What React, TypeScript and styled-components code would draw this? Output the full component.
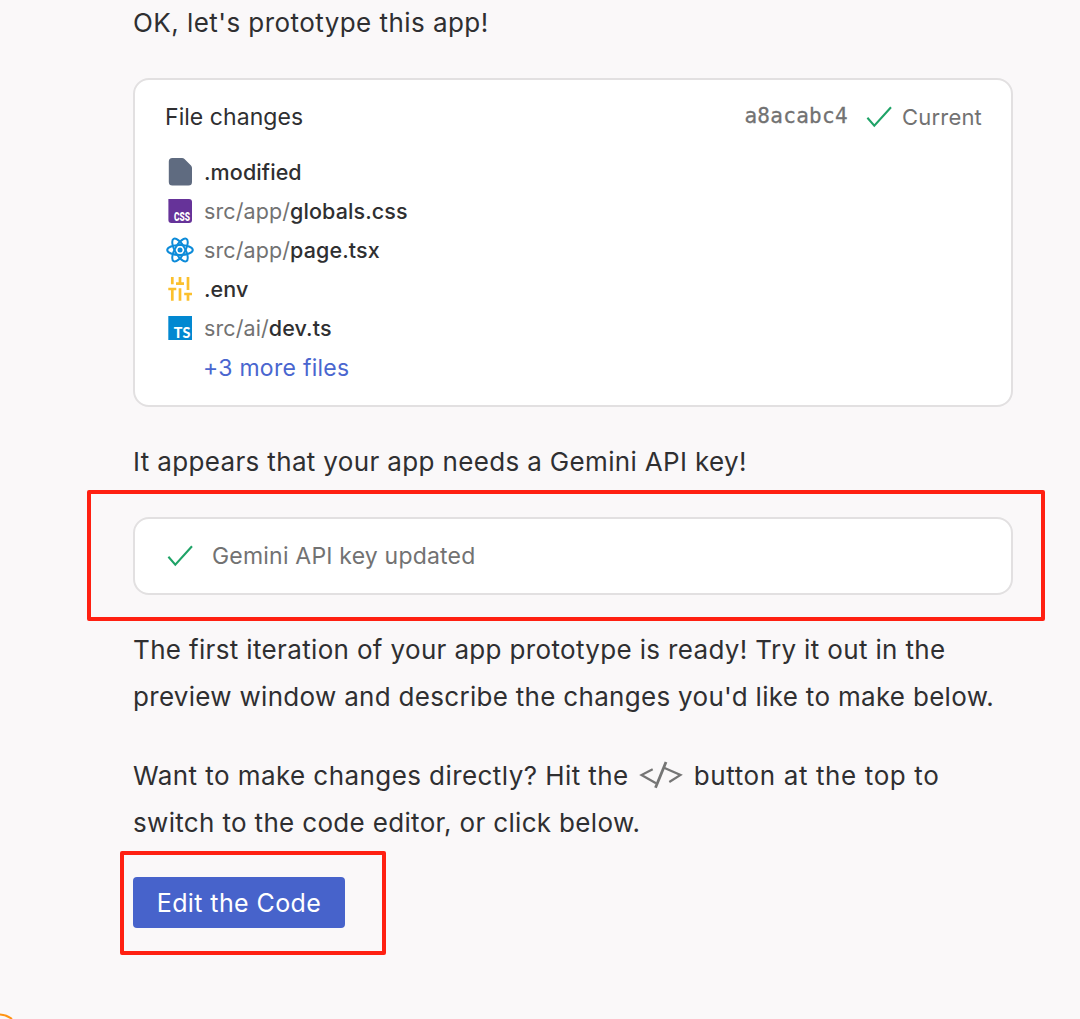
import React from "react";
import styled, { createGlobalStyle } from "styled-components";

const GlobalStyle = createGlobalStyle`
  body { margin: 0; background: #faf8f9; }
  * { box-sizing: border-box; }
`;

const Page = styled.main`
  position: relative;
  width: 1080px;
  height: 1019px;
  overflow: hidden;
  padding: 0 67px 0 133px;
  display: flex;
  flex-direction: column;
  align-items: stretch;
  background: #faf8f9;
  color: #2f2f31;
  font-family: Inter, "Liberation Sans", sans-serif;
  font-size: 26px;
`;

const Paragraph = styled.p<{ $top?: number; $spacing?: number }>`
  margin: ${(p) => p.$top ?? 0}px 0 0;
  line-height: 47px;
  letter-spacing: ${(p) => p.$spacing ?? 0}px;
  white-space: nowrap;
`;

const Line = styled.span<{ $spacing?: number }>`
  display: block;
  letter-spacing: ${(p) => p.$spacing ?? 0}px;
`;

const LineEnd = styled.span`
  letter-spacing: 0.62px;
`;

const Card = styled.section`
  border: 2px solid #e2e0e1;
  border-radius: 16px;
  background: #fff;
`;

const FilesCard = styled(Card)`
  height: 329px;
  margin-top: 32px;
  padding: 16px 29px 0 30px;
`;

const CardHeader = styled.header`
  display: flex;
  align-items: center;
  justify-content: space-between;
  height: 42px;
  margin-bottom: 14px;
  font-size: 23px;
`;

const Title = styled.span`
  letter-spacing: 0.05px;
`;

const Status = styled.div`
  display: flex;
  align-items: center;
  color: #727272;
`;

const Hash = styled.code`
  margin: 0 17px 3px 0;
  font-family: "DejaVu Sans Mono", "Liberation Mono", monospace;
  font-size: 21px;
  letter-spacing: 0.3px;
  -webkit-text-stroke: 0.3px #727272;
`;

const StatusText = styled.span`
  margin-left: 9px;
  font-size: 22px;
  letter-spacing: 0.2px;
`;

const FileList = styled.ul`
  list-style: none;
  margin: 0;
  padding: 0;
`;

const FileRow = styled.li`
  display: flex;
  align-items: center;
  height: 39.2px;
  gap: 9px;
  font-size: 21.5px;
  white-space: nowrap;
`;

const IconSlot = styled.span`
  display: flex;
  width: 30px;
  height: 30px;
  flex: none;
`;

const FileName = styled.span`
  letter-spacing: 0.1px;
  font-weight: 450;
`;

const Folder = styled.span`
  color: #727272;
  font-weight: 400;
`;

const MoreLink = styled.a`
  margin-left: -1px;
  color: #4a66cf;
  font-size: 23px;
  letter-spacing: 0.27px;
`;

const KeyCard = styled(Card)`
  display: flex;
  align-items: center;
  height: 78px;
  margin-top: 32px;
  padding: 0 31px;
  gap: 18px;
  color: #727272;
  font-size: 23px;
`;

const KeyText = styled.span`
  letter-spacing: 0.2px;
`;

const EditButton = styled.button`
  align-self: flex-start;
  width: 212px;
  height: 51px;
  margin-top: 31px;
  padding: 0;
  border: 0;
  border-radius: 4px;
  background: #4763cb;
  color: #fff;
  font: inherit;
  font-size: 25px;
  letter-spacing: 0.4px;
`;

const Marker = styled.div<{ $x: number; $y: number; $w: number; $h: number }>`
  position: absolute;
  left: ${(p) => p.$x}px;
  top: ${(p) => p.$y}px;
  width: ${(p) => p.$w}px;
  height: ${(p) => p.$h}px;
  border: 4px solid #ff2012;
  border-radius: 2px;
  pointer-events: none;
`;

const CornerArc = styled.svg`
  position: absolute;
  left: 0;
  bottom: 0;
`;

const CodeGlyph = styled.svg`
  display: inline-block;
  vertical-align: -4px;
  margin: 0 10px 0 9px;
`;

const Check = () => (
  <svg width="28" height="28" viewBox="0 0 28 28" fill="none" stroke="#1fa367" strokeWidth="2.1">
    <path d="M2.4 14.7 9.3 22.6 26 4.200" />
  </svg>
);

const DocIcon = () => (
  <svg width="30" height="30" viewBox="0 0 30 30">
    <path fill="#5f6b80" d="M7.300 1H17q1.500 0 2.500 1L26 8.500q1 1 1 2.500v14q0 3.500-3.500 3.500H7.300q-3.500 0-3.500-3.500V4.500Q3.800 1 7.300 1z" />
  </svg>
);

const CssIcon = () => (
  <svg width="30" height="30" viewBox="0 0 30 30" overflow="visible">
    <path fill="#663399" d="M3.400 3H24q3 0 3 3v18q0 3-3 3H6.400q-3 0-3-3z" />
    <text x="9" y="24.800" fill="#fff" fontFamily="Roboto, sans-serif" fontWeight="900" fontSize="12" textLength="16" lengthAdjust="spacingAndGlyphs">CSS</text>
  </svg>
);

const ReactIcon = () => (
  <svg width="30" height="30" viewBox="0 0 30 30" fill="none" stroke="#0d8bd9" strokeWidth="2">
    <ellipse cx="15" cy="15" rx="12.800" ry="5" />
    <ellipse cx="15" cy="15" rx="12.800" ry="5" transform="rotate(60 15 15)" />
    <ellipse cx="15" cy="15" rx="12.800" ry="5" transform="rotate(120 15 15)" />
    <circle cx="15" cy="15" r="2.500" fill="#0d8bd9" stroke="none" />
  </svg>
);

const TuneIcon = () => (
  <svg width="30" height="30" viewBox="0 0 30 30" stroke="#fbc02d" strokeWidth="2.700">
    <path d="M7.300 3v7.300M3.300 15h8M7.300 15v11.700M15 3v6M11 9.700h8M15 14.300v12.400M23 3v13M19.200 20h7.800M23 20v6.700" />
  </svg>
);

const TsIcon = () => (
  <svg width="30" height="30" viewBox="0 0 30 30" overflow="visible">
    <path fill="#0288d1" d="M3.300 3H27v24H3.300z" />
    <text x="8.800" y="24.800" fill="#fff" fontFamily="Lato, sans-serif" fontWeight="900" fontSize="14.500" textLength="16.500" lengthAdjust="spacingAndGlyphs">TS</text>
  </svg>
);

const files = [
  { icon: DocIcon, folder: "", name: ".modified" },
  { icon: CssIcon, folder: "src/app/", name: "globals.css" },
  { icon: ReactIcon, folder: "src/app/", name: "page.tsx" },
  { icon: TuneIcon, folder: "", name: ".env" },
  { icon: TsIcon, folder: "src/ai/", name: "dev.ts" },
];

export default function App() {
  return (
    <>
      <GlobalStyle />
      <Page>
        <Paragraph $top={-1} $spacing={0.44}>OK, let's prototype this app!</Paragraph>
        <FilesCard>
          <CardHeader>
            <Title>File changes</Title>
            <Status>
              <Hash>a8acabc4</Hash>
              <Check />
              <StatusText>Current</StatusText>
            </Status>
          </CardHeader>
          <FileList>
            {files.map(({ icon: Icon, folder, name }) => (
              <FileRow key={folder + name}>
                <IconSlot><Icon /></IconSlot>
                <FileName>
                  {folder && <Folder>{folder}</Folder>}
                  {name}
                </FileName>
              </FileRow>
            ))}
            <FileRow>
              <IconSlot />
              <MoreLink>+3 more files</MoreLink>
            </FileRow>
          </FileList>
        </FilesCard>
        <Paragraph $top={31} $spacing={0.35}>It appears that your app needs a Gemini API key!</Paragraph>
        <KeyCard>
          <Check />
          <KeyText>Gemini API key updated</KeyText>
        </KeyCard>
        <Paragraph $top={31}>
          <Line $spacing={0.345}>The first iteration of your app prototype is ready! Try it out in the</Line>
          <Line $spacing={0.3}>preview window and describe the changes you'd like to make below.</Line>
        </Paragraph>
        <Paragraph $top={32}>
          <Line $spacing={0.43}>
            Want to make changes directly? Hit the
            <CodeGlyph width="46" height="28" viewBox="0 0 46 28" fill="none" stroke="#757575" strokeWidth="2.200">
              <path d="M14.700 8.300 3.500 14 18 22.300M26 6.700 42.500 14 31.300 21" />
              <path d="M28 1 17.500 26.700" strokeWidth="2.800" />
            </CodeGlyph>
            <LineEnd>button at the top to</LineEnd>
          </Line>
          <Line $spacing={0.33}>switch to the code editor, or click below.</Line>
        </Paragraph>
        <EditButton>Edit the Code</EditButton>
        <Marker $x={87} $y={490} $w={958} $h={131} />
        <Marker $x={120} $y={851} $w={266} $h={104} />
        <CornerArc width="16" height="8" viewBox="0 0 16 8" fill="none">
          <path d="M-2 3.500Q6 3.500 12 8" stroke="#ff9413" strokeWidth="2" />
        </CornerArc>
      </Page>
    </>
  );
}
